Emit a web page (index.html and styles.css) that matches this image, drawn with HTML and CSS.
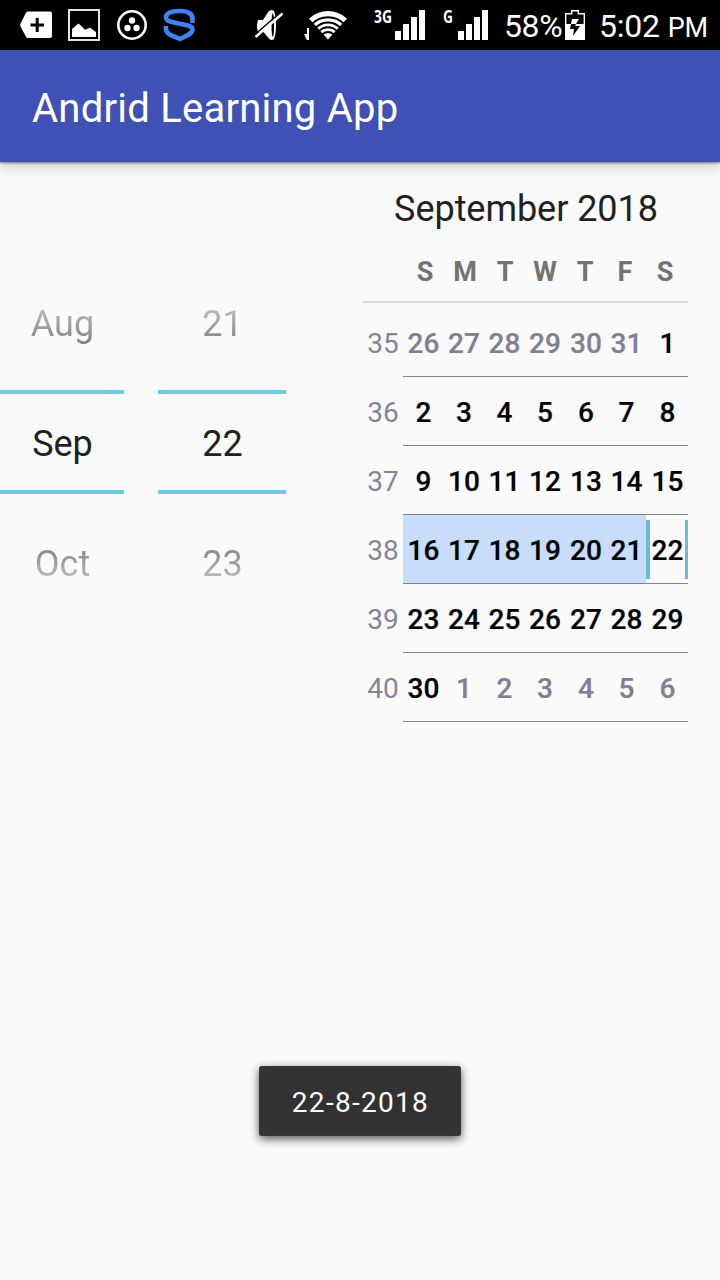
FILE: index.html
```html
<!DOCTYPE html>
<html lang="en">
<head>
<meta charset="utf-8">
<title>Andrid Learning App</title>
<link rel="stylesheet" href="styles.css">
</head>
<body>
<header class="status">
  <div class="notifications">
    <svg width="34" height="50" viewBox="0 0 34 50"><path fill="#fff" d="M8 11.500h22q2 0 2 2v22.500q0 2-2 2H8q-1.300 0-2-1.300L.5 26.500q-.7-1.500 0-3L6 12.800q.7-1.300 2-1.300z"/><path stroke="#000" stroke-width="3" d="M10.500 25H24M17.200 18v14"/></svg>
    <svg width="32" height="50" viewBox="0 0 32 50"><rect x="1" y="10" width="30" height="30" fill="none" stroke="#e4e4e4" stroke-width="2"/><path fill="#fff" d="M4 37v-8l6.500-5.500 6.500 6.300 5-2 6 4.200v5z"/></svg>
    <svg width="32" height="50" viewBox="0 0 32 50"><circle cx="16" cy="25" r="13.700" fill="none" stroke="#fff" stroke-width="2.600"/><g fill="#fff"><circle cx="16" cy="20.500" r="3.200"/><circle cx="11.500" cy="28" r="3.200"/><circle cx="20.500" cy="28" r="3.200"/></g></svg>
    <svg width="34" height="50" viewBox="0 0 34 50"><path fill="none" stroke="#3f83f2" stroke-width="4.600" d="M30.500 23V19C30.500 13 25 11 18 11 9 11 4 13 4 17.500 4 20.500 6 21 10 22L26 25.500Q31 27 30.500 30C30 34 25 35.500 18 39 10 35.500 4 34 4 29V26"/></svg>
  </div>
  <div class="system">
    <svg class="mute" width="30" height="50" viewBox="0 0 30 50"><path fill="#fff" d="M4 20h5l5.500-8.500Q17 9 19.500 10.500 22 14 22 25t-2.500 14.500q-3 1.300-5-1.500l-5-6H4q-2-6 0-12z"/><ellipse cx="18.800" cy="25" rx="1.300" ry="12" fill="#000"/><path d="M0 35.500L27 12" stroke="#000" stroke-width="1.500"/><path d="M1.500 37L28.500 13.500" stroke="#fff" stroke-width="2.500"/></svg>
    <svg class="wifi" width="44" height="50" viewBox="0 0 44 50"><path fill="#fff" d="M5 18.500A28 28 0 0 1 43 18.500L24 39.500z"/><g fill="none" stroke="#000" stroke-width="1.900"><circle cx="24" cy="39.500" r="22.300"/><circle cx="24" cy="39.500" r="17"/><circle cx="24" cy="39.500" r="12.200"/><circle cx="24" cy="39.500" r="7.500"/></g><path fill="#fff" d="M3 28h2v12H3l-3-6h3z"/></svg>
    <svg class="signal-3g" width="52" height="50" viewBox="0 0 52 50"><text x="1" y="23" class="network" textLength="18" lengthAdjust="spacingAndGlyphs">3G</text><path fill="#fff" d="M22 31h6v9h-6zM30 24h6v16h-6zM38 17h6v23h-6zM46 10h6v30h-6z"/></svg>
    <svg class="signal-g" width="46" height="50" viewBox="0 0 46 50"><text x="0" y="23" class="network" textLength="10" lengthAdjust="spacingAndGlyphs">G</text><path fill="#fff" d="M15 31h6v9h-6zM23 24h6v16h-6zM31 17h6v23h-6zM39 10h6v30h-6z"/></svg>
    <span class="percent">58%</span>
    <svg class="battery" width="20" height="50" viewBox="0 0 20 50"><path d="M.7 39.300V13.700h6v-3h6.600v3h6v25.600z" fill="#000" stroke="#fff" stroke-width="1.400"/><path fill="#fff" d="M1 24h18v15H1z"/><path fill="#fff" d="M7 19h7l-3 5H6z"/><path fill="#000" d="M6 24h5l-1 2h5L8 36l1-7H5z"/></svg>
    <span class="clock">5:02 <small>PM</small></span>
  </div>
</header>
<div class="appbar"><h1>Andrid Learning App</h1></div>
<main class="datepicker">
  <div class="spinners">
    <div class="spinner month"><span class="prev">Aug</span><span class="current">Sep</span><span class="next">Oct</span></div>
    <div class="spinner day"><span class="prev">21</span><span class="current">22</span><span class="next">23</span></div>
  </div>
  <section class="calendar">
    <h2>September 2018</h2>
    <div class="weekdays"><span>S</span><span>M</span><span>T</span><span>W</span><span>T</span><span>F</span><span>S</span></div>
    <div class="week"><i>35</i><b class="out">26</b><b class="out">27</b><b class="out">28</b><b class="out">29</b><b class="out">30</b><b class="out">31</b><b>1</b></div>
    <div class="week"><i>36</i><b>2</b><b>3</b><b>4</b><b>5</b><b>6</b><b>7</b><b>8</b></div>
    <div class="week"><i>37</i><b>9</b><b>10</b><b>11</b><b>12</b><b>13</b><b>14</b><b>15</b></div>
    <div class="week active"><i>38</i><b>16</b><b>17</b><b>18</b><b>19</b><b>20</b><b>21</b><b class="selected">22</b></div>
    <div class="week"><i>39</i><b>23</b><b>24</b><b>25</b><b>26</b><b>27</b><b>28</b><b>29</b></div>
    <div class="week"><i>40</i><b>30</b><b class="out">1</b><b class="out">2</b><b class="out">3</b><b class="out">4</b><b class="out">5</b><b class="out">6</b></div>
  </section>
</main>
<div class="toast"><span>22-8-2018</span></div>
</body>
</html>
```
FILE: styles.css
```css
* { box-sizing: border-box; }
body { margin: 0; width: 720px; height: 1280px; background: #fafafa; font-family: Roboto, sans-serif; color: #212121; overflow: hidden; }
svg { display: block; flex: none; }
.status { display: flex; justify-content: space-between; height: 50px; background: #000; color: #fff; padding: 0 12px 0 20px; }
.notifications { display: flex; gap: 14px; }
.notifications svg:nth-child(2) { margin-right: 2px; }
.system { display: flex; white-space: nowrap; line-height: 52px; }
.mute { margin-right: 20px; }
.wifi { margin-right: 25px; }
.signal-3g { margin-right: 18px; }
.signal-g { margin-right: 15px; }
.network { font: bold 17px "Open Sans", sans-serif; fill: #fff; }
.percent { font-size: 32px; width: 61px; letter-spacing: -0.4px; }
.clock { font-size: 32px; width: 108px; margin-left: 14px; letter-spacing: -0.2px; }
.clock small { font-size: 27px; }
.system { margin-right: 1px; }
.system .clock { width: 108px; }
.appbar { height: 112px; background: #3f51b5; padding-left: 32px; box-shadow: 0 1px 2px rgba(0,0,0,.45), 0 4px 12px rgba(0,0,0,.22); }
h1 { margin: 0; font-size: 40px; font-weight: 400; line-height: 117px; color: #fff; letter-spacing: .24px; }
.datepicker { display: flex; justify-content: space-between; padding-right: 32px; height: 904px; }
.spinners { display: flex; gap: 34px; padding-top: 102px; }
.spinner { display: grid; grid-template-rows: 126px 104px 126px; height: 356px; text-align: center; font-size: 36px; }
.spinner span { padding-left: 1px; line-height: 120px; }
.month { width: 124px; }
.day { width: 128px; }
.current { border: solid #6fc8e8; border-width: 4px 0; }
.spinner .current { line-height: 100px; }
.prev, .next { color: transparent; background-clip: text; -webkit-background-clip: text; }
.prev { background-image: linear-gradient(#fafafa 0, #c4c4c4 40px, #777 85px); }
.spinner .next { padding-top: 10px; background-image: linear-gradient(#777 45px, #c4c4c4 90px, #fafafa 126px); }
.calendar { width: 325px; padding-top: 22px; }
h2 { margin: 0; font-size: 36px; font-weight: 400; line-height: 50px; text-align: center; padding-left: 1px; letter-spacing: -.05px; }
.weekdays { display: grid; grid-template-columns: repeat(7, 40px); height: 69px; padding-left: 42px; line-height: 76px; border-bottom: 2px solid #ddd; margin-bottom: 5px; text-align: center; font-size: 27px; font-weight: 700; color: #737373; }
.week { display: grid; grid-template-columns: 40px 40px 41px 40px 41px 41px 40px 42px; height: 69px; line-height: 71px; font-size: 28px; text-align: center; background: linear-gradient(#827f93, #827f93) 40px 68px / 285px 1px no-repeat; }
.week i { font-style: normal; color: #86839a; }
.week b { font-weight: 500; color: #000; height: 68px; padding-left: 1px; -webkit-text-stroke: .2px; }
.week .out { color: #827f93; }
.active b { background: #c8dcfb; }
.active .selected { background: linear-gradient(#68bddf, #68bddf) left 5px / 4px 59px no-repeat, linear-gradient(#68bddf, #68bddf) right 5px / 3px 59px no-repeat; }
.toast { width: 202px; height: 70px; margin: 0 auto; border-radius: 3px; background: #323232; box-shadow: 0 3px 10px rgba(0,0,0,.65), inset 0 0 12px #3a3a3a; color: #fff; text-align: center; font-size: 28px; line-height: 73px; letter-spacing: 1.3px; padding-left: 1px; }
```
